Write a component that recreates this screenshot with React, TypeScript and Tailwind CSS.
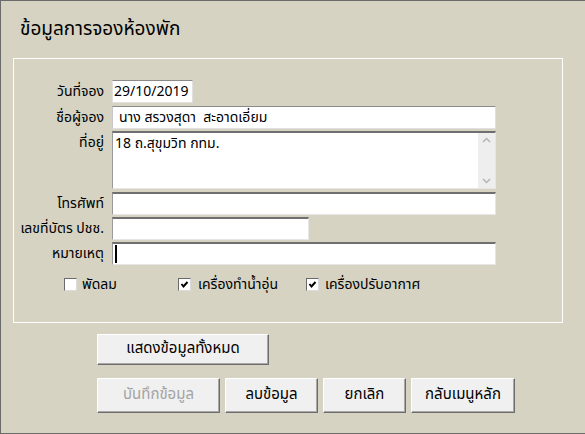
import React from "react";

const font = { fontFamily: 'Tahoma, "Noto Sans Thai", "Noto Sans", "DejaVu Sans", sans-serif' };

function Sunken({ className = "", children }: { className?: string; children?: React.ReactNode }) {
  return (
    <div
      className={
        "bg-white border-t-2 border-l border-t-[#6f6f6f] border-l-[#9a9a9a] border-r border-b border-r-[#e6e6e6] border-b-[#e6e6e6] box-border " +
        className
      }
    >
      {children}
    </div>
  );
}

function Check({ checked }: { checked: boolean }) {
  return (
    <div className="w-[13px] h-[13px] shrink-0 bg-white border border-t-[#6a6a6a] border-l-[#6a6a6a] border-r-[#dcdcdc] border-b-[#dcdcdc] flex items-center justify-center box-border">
      {checked && (
        <svg width="9" height="9" viewBox="0 0 9 9">
          <path d="M1.5 4 L3.5 6.5 L7.5 2" stroke="#000" strokeWidth="2" fill="none" />
        </svg>
      )}
    </div>
  );
}

function Btn({ w, h, children, disabled }: { w: string; h: string; children: React.ReactNode; disabled?: boolean }) {
  return (
    <div
      className={
        "flex items-center justify-center bg-[#f0f0f0] border border-t-white border-l-white border-r-[#6c6c6c] border-b-[#6c6c6c] shadow-[inset_-1px_-1px_0_#a8a8a8] box-border text-[15px] " +
        w +
        " " +
        h +
        (disabled ? " text-[#a3a3a3]" : " text-black")
      }
    >
      {children}
    </div>
  );
}

export default function App() {
  return (
    <div
      style={font}
      className="w-[585px] h-[434px] bg-[#d6d3c2] border-t border-l border-b border-[#6b6b6b] box-border overflow-hidden text-black"
    >
      <div className="pl-[19px] pt-[16px] text-[19px] leading-[26px]">ข้อมูลการจองห้องพัก</div>
      <div className="ml-[12px] mt-[15px] w-[550px] h-[265px] border border-white box-border pt-[21px]">
        <div className="flex flex-col text-[14px]">
          <div className="flex items-center h-[23px]">
            <div className="w-[90px] text-right whitespace-nowrap">วันที่จอง</div>
            <div className="ml-[8px] w-[81px] h-[23px] bg-white border-t border-l border-t-[#8a8a8a] border-l-[#e0e0e0] border-r border-b border-r-[#e0e0e0] border-b-[#e0e0e0] box-border pl-[1px] flex items-center">
              29/10/2019
            </div>
          </div>
          <div className="flex items-center h-[23px] mt-[3px]">
            <div className="w-[90px] text-right whitespace-nowrap">ชื่อผู้จอง</div>
            <div className="ml-[8px] w-[384px] h-[23px] bg-white border-t border-l border-t-[#8a8a8a] border-l-[#c8c8c8] border-r border-b border-r-[#e0e0e0] border-b-[#e0e0e0] box-border pl-[6px] flex items-center">
              นาง สรวงสุดา&nbsp; สะอาดเอี่ยม
            </div>
          </div>
          <div className="flex items-start h-[58px] mt-[2px]">
            <div className="w-[90px] text-right whitespace-nowrap mt-[1px]">ที่อยู่</div>
            <Sunken className="ml-[8px] w-[384px] h-[58px] flex">
              <div className="flex-1 pl-[2px] pt-[0px]">18 ถ.สุขุมวิท กทม.</div>
              <div className="w-[17px] h-full bg-[#eeeeee] flex flex-col justify-between items-center py-[4px]">
                <svg width="9" height="6" viewBox="0 0 9 6">
                  <path d="M1 5 L4.5 1.5 L8 5" stroke="#b4b4b4" strokeWidth="1.5" fill="none" />
                </svg>
                <svg width="9" height="6" viewBox="0 0 9 6">
                  <path d="M1 1 L4.5 4.5 L8 1" stroke="#b4b4b4" strokeWidth="1.5" fill="none" />
                </svg>
              </div>
            </Sunken>
          </div>
          <div className="flex items-center h-[23px] mt-[3px]">
            <div className="w-[90px] text-right whitespace-nowrap">โทรศัพท์</div>
            <Sunken className="ml-[8px] w-[384px] h-[23px]" />
          </div>
          <div className="flex items-center h-[23px] mt-[2px]">
            <div className="w-[90px] text-right whitespace-nowrap flex justify-end">
              <span className="whitespace-nowrap">เลขที่บัตร ปชช.</span>
            </div>
            <Sunken className="ml-[8px] w-[197px] h-[23px]" />
          </div>
          <div className="flex items-center h-[23px] mt-[2px]">
            <div className="w-[90px] text-right whitespace-nowrap">หมายเหตุ</div>
            <Sunken className="ml-[8px] w-[384px] h-[23px] flex items-center pl-[2px]">
              <div className="w-[2px] h-[18px] bg-black" />
            </Sunken>
          </div>
          <div className="flex items-center mt-[11px] h-[16px]">
            <div className="ml-[50px] w-[114px] flex items-center">
              <Check checked={false} />
              <span className="ml-[5px]">พัดลม</span>
            </div>
            <div className="w-[128px] flex items-center">
              <Check checked={true} />
              <span className="ml-[7px] whitespace-nowrap">เครื่องทำน้ำอุ่น</span>
            </div>
            <div className="flex items-center">
              <Check checked={true} />
              <span className="ml-[6px] whitespace-nowrap">เครื่องปรับอากาศ</span>
            </div>
          </div>
        </div>
      </div>
      <div className="ml-[96px] mt-[11px]">
        <Btn w="w-[172px]" h="h-[31px]">แสดงข้อมูลทั้งหมด</Btn>
        <div className="flex gap-[5px] mt-[13px]">
          <Btn w="w-[123px]" h="h-[35px]" disabled>
            บันทึกข้อมูล
          </Btn>
          <Btn w="w-[93px]" h="h-[35px]">ลบข้อมูล</Btn>
          <Btn w="w-[83px]" h="h-[35px]">ยกเลิก</Btn>
          <Btn w="w-[104px]" h="h-[35px]">กลับเมนูหลัก</Btn>
        </div>
      </div>
    </div>
  );
}
